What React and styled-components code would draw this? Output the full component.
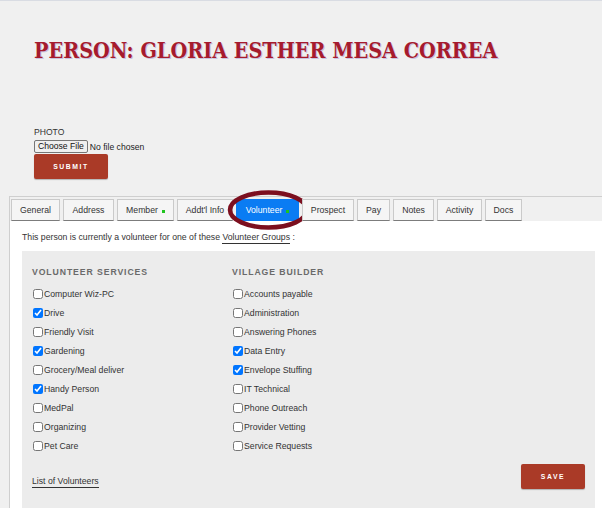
import React from "react";
import styled, { createGlobalStyle } from "styled-components";

const GlobalStyle = createGlobalStyle`
  html, body { margin: 0; padding: 0; }
  body {
    background: #f0f0f0;
    font-family: "Liberation Sans", Arial, sans-serif;
    color: #333;
    overflow: hidden;
  }
`;

const Page = styled.div`
  border-top: 1px solid #d9dce3;
  min-height: 507px;
`;

const Header = styled.header`
  padding: 37px 0 0 34px;
  height: 82px;
  box-sizing: border-box;
`;

const Title = styled.h1`
  margin: 0;
  font-family: "DejaVu Serif Condensed", "DejaVu Serif", serif;
  font-stretch: condensed;
  font-weight: bold;
  font-size: 21.4px;
  line-height: 26px;
  color: #a61b2d;
  text-shadow: 1px 1px 0 #c9c2de;
  letter-spacing: 0;
`;

const PhotoForm = styled.form`
  padding: 44px 0 0 34px;
  display: flex;
  flex-direction: column;
  align-items: flex-start;
`;

const FieldLabel = styled.label`
  font-size: 8.6px;
  line-height: 10px;
  color: #333;
`;

const FileRow = styled.div`
  display: flex;
  align-items: center;
  margin-top: 3px;
  font-size: 8.6px;
  color: #222;
`;

const FileButton = styled.span`
  display: inline-block;
  border: 1px solid #767676;
  border-radius: 2px;
  background: #efefef;
  padding: 0 3px;
  height: 11px;
  line-height: 11px;
  font-size: 8.6px;
  color: #111;
`;

const FileName = styled.span`
  margin-left: 2px;
`;

const RedButton = styled.button`
  border: none;
  border-radius: 2px;
  background: #aa3a27;
  color: #fff;
  font-family: "Liberation Sans", Arial, sans-serif;
  font-weight: bold;
  font-size: 6.8px;
  letter-spacing: 1.6px;
  width: ${(p) => p.$w}px;
  height: 25px;
  padding: 0;
  box-shadow: 0 1px 1px rgba(0, 0, 0, 0.25);
  cursor: pointer;
`;

const SubmitButton = styled(RedButton)`
  margin-top: 1px;
`;

const TabsWrap = styled.section`
  margin: 17px 0 0 9px;
  border-top: 1px solid #cfcfcf;
  border-left: 1px solid #cfcfcf;
`;

const TabList = styled.nav`
  display: flex;
  gap: 3px;
  padding: 2px 0 0 1px;
  background: #f0f0f0;
`;

const Tab = styled.div`
  position: relative;
  width: ${(p) => p.$w}px;
  height: 22px;
  box-sizing: border-box;
  display: flex;
  align-items: center;
  justify-content: center;
  border: 1px solid ${(p) => (p.$active ? "#0a7cf3" : "#cacaca")};
  border-bottom-color: ${(p) => (p.$active ? "#0a7cf3" : "#7c7c7c")};
  background: ${(p) => (p.$active ? "#0a7cf3" : "#f5f5f5")};
  color: ${(p) => (p.$active ? "#fff" : "#333")};
  font-size: 8.7px;
  white-space: nowrap;
`;

const Dot = styled.span`
  width: 3px;
  height: 3px;
  background: #1fc41f;
  margin-left: 4px;
  margin-top: 2px;
`;

const Circle = styled.svg`
  position: absolute;
  left: -10px;
  top: -10px;
  pointer-events: none;
`;

const Panel = styled.div`
  background: #fff;
  padding: 11px 7px 0 12px;
`;

const Intro = styled.p`
  margin: 0 0 9px 0;
  font-size: 8.7px;
  line-height: 10px;
  color: #333;
`;

const UnderLink = styled.a`
  color: #333;
  text-decoration: none;
  border-bottom: 1px solid #333;
  padding-bottom: 1px;
`;

const GroupBox = styled.div`
  background: #ececec;
  padding: 16px 10px 20px 10px;
  min-height: 240px;
`;

const Columns = styled.div`
  display: grid;
  grid-template-columns: 200px 200px;
`;

const Column = styled.div`
  display: flex;
  flex-direction: column;
`;

const Heading = styled.h3`
  margin: 0 0 7px 0;
  font-size: 8.7px;
  line-height: 10px;
  font-weight: bold;
  letter-spacing: 0.9px;
  color: #6a6a6a;
`;

const CheckRow = styled.label`
  display: flex;
  align-items: center;
  height: 19px;
  font-size: 8.7px;
  color: #333;
`;

const Box = styled.input`
  width: 10px;
  height: 10px;
  margin: 0 1px 0 1px;
`;

const Footer = styled.div`
  display: flex;
  justify-content: space-between;
  align-items: flex-end;
  margin-top: 9px;
`;

const FooterLink = styled(UnderLink)`
  font-size: 8.7px;
  margin-bottom: 1px;
`;

const services = [
  ["Computer Wiz-PC", false],
  ["Drive", true],
  ["Friendly Visit", false],
  ["Gardening", true],
  ["Grocery/Meal deliver", false],
  ["Handy Person", true],
  ["MedPal", false],
  ["Organizing", false],
  ["Pet Care", false],
];

const builder = [
  ["Accounts payable", false],
  ["Administration", false],
  ["Answering Phones", false],
  ["Data Entry", true],
  ["Envelope Stuffing", true],
  ["IT Technical", false],
  ["Phone Outreach", false],
  ["Provider Vetting", false],
  ["Service Requests", false],
];

const tabs = [
  { label: "General", w: 49 },
  { label: "Address", w: 51 },
  { label: "Member", w: 57, dot: true },
  { label: "Addt'l Info", w: 56 },
  { label: "Volunteer", w: 63, dot: true, active: true },
  { label: "Prospect", w: 52 },
  { label: "Pay", w: 33 },
  { label: "Notes", w: 41 },
  { label: "Activity", w: 45 },
  { label: "Docs", w: 37 },
];

function Group({ title, items }) {
  return (
    <Column>
      <Heading>{title}</Heading>
      {items.map(([name, checked]) => (
        <CheckRow key={name}>
          <Box type="checkbox" defaultChecked={checked} />
          {name}
        </CheckRow>
      ))}
    </Column>
  );
}

export default function App() {
  return (
    <>
      <GlobalStyle />
      <Page>
        <Header>
          <Title>PERSON: GLORIA ESTHER MESA CORREA</Title>
        </Header>
        <PhotoForm onSubmit={(e) => e.preventDefault()}>
          <FieldLabel>PHOTO</FieldLabel>
          <FileRow>
            <FileButton>Choose File</FileButton>
            <FileName>No file chosen</FileName>
          </FileRow>
          <SubmitButton $w={74}>SUBMIT</SubmitButton>
        </PhotoForm>
        <TabsWrap>
          <TabList>
            {tabs.map((t) => (
              <Tab key={t.label} $active={t.active} $w={t.w}>
                {t.label}
                {t.dot && <Dot />}
                {t.active && (
                  <Circle width="83" height="40" viewBox="0 0 83 40">
                    <ellipse cx="41.5" cy="20" rx="38.5" ry="17.5" fill="none" stroke="#7c0f1f" strokeWidth="4.5" />
                  </Circle>
                )}
              </Tab>
            ))}
          </TabList>
          <Panel>
            <Intro>
              This person is currently a volunteer for one of these <UnderLink href="#">Volunteer Groups</UnderLink> :
            </Intro>
            <GroupBox>
              <Columns>
                <Group title="VOLUNTEER SERVICES" items={services} />
                <Group title="VILLAGE BUILDER" items={builder} />
              </Columns>
              <Footer>
                <FooterLink href="#">List of Volunteers</FooterLink>
                <RedButton $w={64}>SAVE</RedButton>
              </Footer>
            </GroupBox>
          </Panel>
        </TabsWrap>
      </Page>
    </>
  );
}
